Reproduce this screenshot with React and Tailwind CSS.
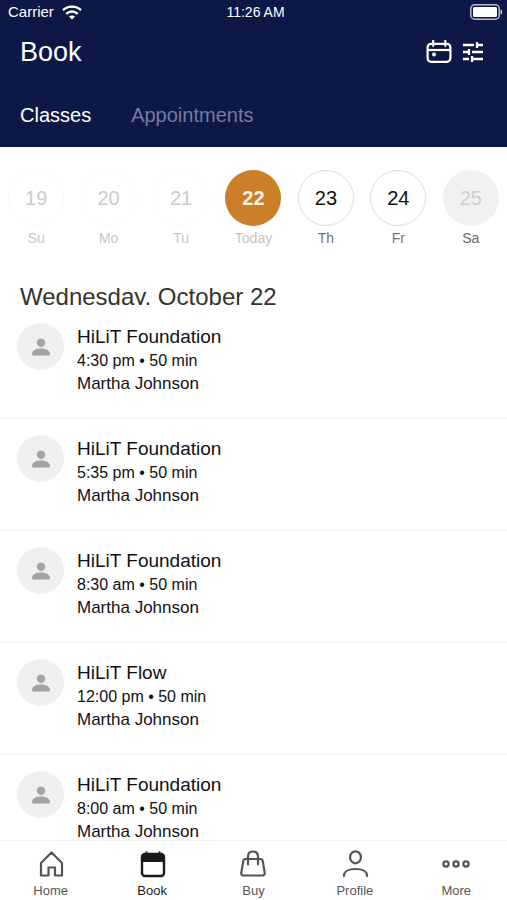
import React, { useState } from "react";

const days = [
  { date: 19, label: "Su", state: "past" },
  { date: 20, label: "Mo", state: "past" },
  { date: 21, label: "Tu", state: "past" },
  { date: 22, label: "Today", state: "selected" },
  { date: 23, label: "Th", state: "open" },
  { date: 24, label: "Fr", state: "open" },
  { date: 25, label: "Sa", state: "closed" },
];

const dayStyles = {
  past: "border border-[#fafafa] text-[#cbcbcb]",
  selected: "bg-[#cb7f28] text-[#fdf3e6] font-bold",
  open: "border border-[#dedede] text-[#111111]",
  closed: "bg-[#f1f1f1] text-[#cfcfcf]",
};

const labelStyles = {
  past: "text-[#c6c6c6]",
  selected: "text-[#c6c6c6]",
  open: "text-[#757575]",
  closed: "text-[#666666]",
};

const classes = [
  { id: 1, name: "HiLiT Foundation", time: "4:30 pm", teacher: "Martha Johnson" },
  { id: 2, name: "HiLiT Foundation", time: "5:35 pm", teacher: "Martha Johnson" },
  { id: 3, name: "HiLiT Foundation", time: "8:30 am", teacher: "Martha Johnson" },
  { id: 4, name: "HiLiT Flow", time: "12:00 pm", teacher: "Martha Johnson" },
  { id: 5, name: "HiLiT Foundation", time: "8:00 am", teacher: "Martha Johnson" },
];

const WifiIcon = () => (
  <svg width="20" height="15" viewBox="0 0 20 15" fill="none" stroke="currentColor" strokeWidth="2.4">
    <path d="M1 5.2C6 .4 14 .4 19 5.2" />
    <path d="M4.3 8.8c3.2-3 8.2-3 11.4 0" />
    <path d="M10 14.6 7 11.6c1.6-1.500 4.400-1.500 6 0z" fill="currentColor" stroke="none" />
  </svg>
);

const BatteryIcon = () => (
  <svg width="33" height="16" viewBox="0 0 33 16" fill="none">
    <rect x="0.8" y="0.8" width="28.4" height="14.4" rx="4" stroke="#b9bdd3" strokeWidth="1.5" />
    <rect x="3" y="3" width="24" height="10" rx="1.5" fill="#fff" />
    <path d="M30.6 5.2c2 .7 2 4.9 0 5.6z" fill="#d5d8e6" />
  </svg>
);

const CalendarIcon = () => (
  <svg width="26" height="24" viewBox="0 0 26 24" fill="none" stroke="currentColor" strokeWidth="2.2">
    <rect x="1.6" y="3.8" width="22.8" height="18" rx="3.5" />
    <path d="M2 10h22" />
    <path d="M7.2 1v4.800M19.300 1v4.800" strokeLinecap="round" />
    <circle cx="8" cy="14.5" r="2" fill="currentColor" stroke="none" />
  </svg>
);

const FilterIcon = () => (
  <svg width="22" height="22" viewBox="0 0 22 22" fill="none" stroke="currentColor" strokeWidth="2.3">
    <path d="M1 4h11M15 4h6M15 1v6" />
    <path d="M1 11h6M7 8v6M10 11h11" />
    <path d="M1 18h6M10 18h11M10 15v6" />
  </svg>
);

const PersonIcon = () => (
  <svg width="20" height="20" viewBox="0 0 20 20" fill="#a3a3a3">
    <circle cx="10" cy="5.8" r="4.2" />
    <path d="M1.2 18.6v-2.2c0-3 4.4-4.8 8.8-4.8s8.8 1.8 8.8 4.8v2.2z" />
  </svg>
);

const HomeIcon = () => (
  <svg width="28" height="28" viewBox="0 0 28 28" fill="none" stroke="currentColor" strokeWidth="2.2" strokeLinejoin="round">
    <path d="M4 25.500V13L14.500 2.500 25 13v12.500h-7v-8h-6.500v8z" />
  </svg>
);

const BookIcon = () => (
  <svg width="28" height="28" viewBox="0 0 28 28" fill="none" stroke="currentColor">
    <rect x="4" y="4" width="22" height="22" rx="3" strokeWidth="2.4" />
    <path d="M4 11.500V7a3 3 0 0 1 3-3h16a3 3 0 0 1 3 3v4.500z" fill="currentColor" />
    <path d="M8.500 1.500v4M21.500 1.500v4" strokeWidth="2" />
  </svg>
);

const BuyIcon = () => (
  <svg width="28" height="28" viewBox="0 0 28 28" fill="none" stroke="currentColor" strokeWidth="2.2" strokeLinejoin="round" strokeLinecap="round">
    <path d="M6.500 9h15c1.300 0 2 .7 2.200 1.900l2 11.600c.3 1.800-.7 3-2.500 3H4.800c-1.800 0-2.800-1.200-2.500-3l2-11.600C4.500 9.700 5.200 9 6.500 9z" />
    <path d="M9 14.500V6.800C9 3.600 11 1.500 14 1.500s5 2.100 5 5.300v7.700" />
  </svg>
);

const ProfileIcon = () => (
  <svg width="28" height="28" viewBox="0 0 28 28" fill="none" stroke="currentColor" strokeWidth="2.2" strokeLinecap="round">
    <ellipse cx="14.500" cy="7.300" rx="5.400" ry="6" />
    <path d="M3 26v-.5c0-4.200 5-6.500 11.500-6.500s11.500 2.300 11.500 6.500v.5" />
  </svg>
);

const MoreIcon = () => (
  <svg width="28" height="28" viewBox="0 0 28 28" fill="none" stroke="currentColor" strokeWidth="2.300">
    <circle cx="4" cy="14" r="2.600" />
    <circle cx="14" cy="14" r="2.600" />
    <circle cx="24" cy="14" r="2.600" />
  </svg>
);

const navItems = [
  { label: "Home", Icon: HomeIcon },
  { label: "Book", Icon: BookIcon },
  { label: "Buy", Icon: BuyIcon },
  { label: "Profile", Icon: ProfileIcon },
  { label: "More", Icon: MoreIcon },
];

const App = () => {
  const [tab, setTab] = useState("Classes");
  const [page, setPage] = useState("Book");

  return (
    <div className="flex flex-col h-screen bg-white font-['Liberation_Sans',Arial,sans-serif]">
      <header className="shrink-0 bg-[#0d1846] text-white">
        {/* Status bar */}
        <div className="grid grid-cols-3 items-center h-6 pl-2 pr-1">
          <div className="flex items-center gap-2 text-[15px]">
            <span>Carrier</span>
            <WifiIcon />
          </div>
          <span className="text-center text-sm">11:26 AM</span>
          <div className="flex justify-end">
            <BatteryIcon />
          </div>
        </div>

        <div className="flex items-center justify-between h-14 pl-5 pr-[23px]">
          <h1 className="text-[27px]">Book</h1>
          <div className="flex items-center gap-2.5">
            <button aria-label="Choose a date">
              <CalendarIcon />
            </button>
            <button aria-label="Filter classes">
              <FilterIcon />
            </button>
          </div>
        </div>

        <div className="flex gap-10 h-[67px] pl-5 pt-[21px] items-start">
          {["Classes", "Appointments"].map((name) => (
            <button
              key={name}
              onClick={() => setTab(name)}
              className={`text-xl leading-7 ${
                tab === name ? "text-white" : "text-[#747b9f]"
              }`}
            >
              {name}
            </button>
          ))}
        </div>
      </header>

      {/* Week */}
      <div className="grid grid-cols-7 shrink-0 pt-[23px]">
        {days.map((day) => (
          <button key={day.date} className="flex flex-col items-center">
            <span
              className={`flex items-center justify-center size-14 rounded-full text-xl ${dayStyles[day.state]}`}
            >
              {day.date}
            </span>
            <span className={`mt-0.5 text-sm ${labelStyles[day.state]}`}>
              {day.label}
            </span>
          </button>
        ))}
      </div>

      <h2 className="shrink-0 mt-[37px] h-5 overflow-hidden pl-5 text-2xl leading-6 text-[#333333]">
        Wednesday, October 22
      </h2>

      <main className="flex-1 min-h-0 overflow-hidden pt-0.5">
        <ul>
          {classes.map((item) => (
            <li
              key={item.id}
              className="flex gap-[13px] pl-[17px] pt-4 pb-[23px] border-b border-[#f3f3f3]"
            >
              <div className="flex items-center justify-center size-[47px] rounded-full bg-[#f0f0f0]">
                <PersonIcon />
              </div>
              <div className="mt-0.5 text-[#111111]">
                <h3 className="text-[19px] leading-6">{item.name}</h3>
                <p className="text-base leading-6">{item.time} • 50 min</p>
                <p className="text-[17px] leading-[22px]">{item.teacher}</p>
              </div>
            </li>
          ))}
        </ul>
      </main>

      <nav className="grid grid-cols-5 shrink-0 h-[60px] pt-[9px] border-t border-[#f0f0f0] bg-white">
        {navItems.map(({ label, Icon }) => (
          <button
            key={label}
            onClick={() => setPage(label)}
            className={`flex flex-col items-center gap-[3px] text-[13px] leading-5 ${
              page === label ? "text-[#1b1b1d]" : "text-[#555555]"
            }`}
          >
            <Icon />
            <span>{label}</span>
          </button>
        ))}
      </nav>
    </div>
  );
};

export default App;
